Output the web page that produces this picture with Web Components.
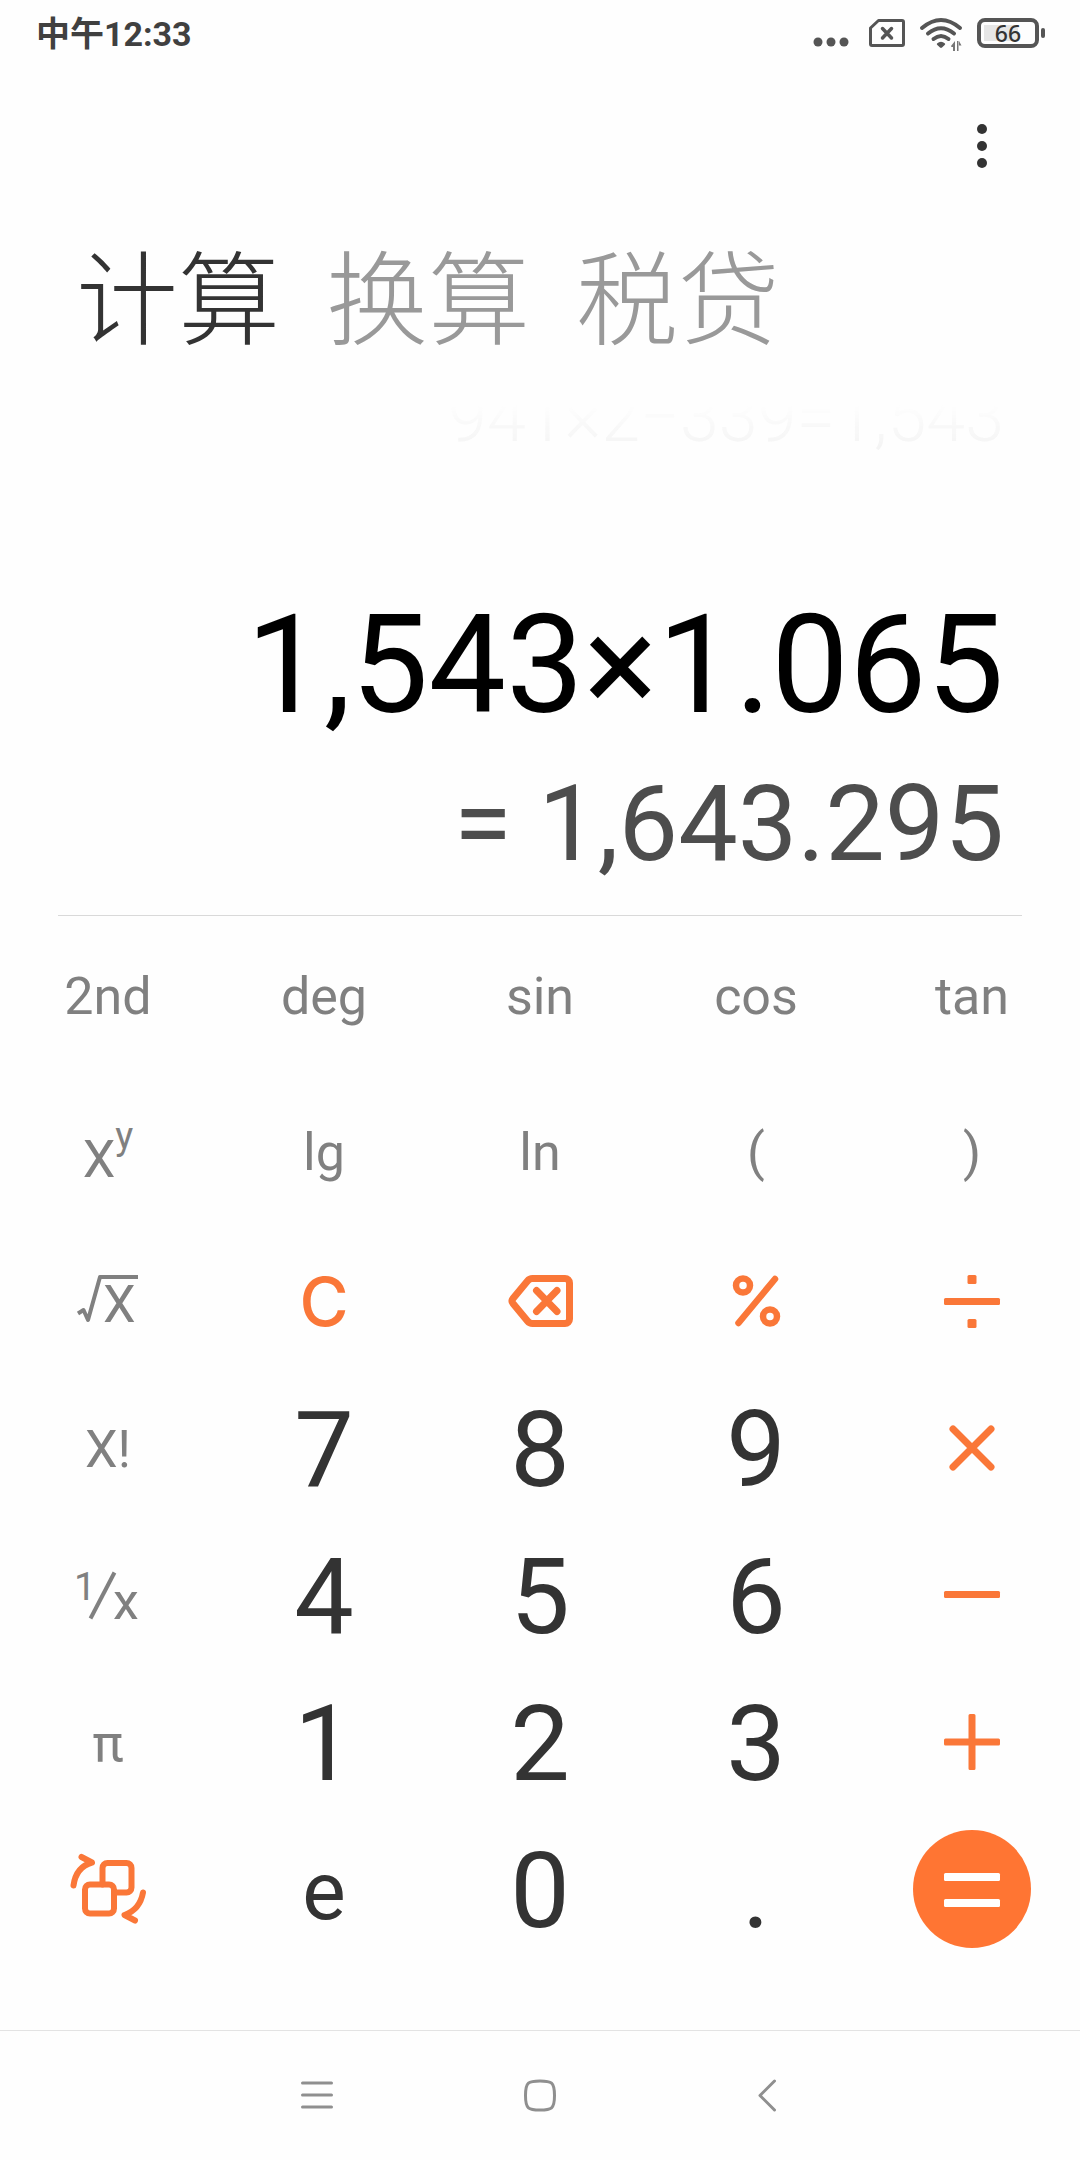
<!DOCTYPE html>
<html lang="zh-CN">
<head>
<meta charset="utf-8">
<meta name="viewport" content="width=device-width, initial-scale=1">
<title>计算器</title>
<style>
html, body { margin: 0; }
body {
  background: #fefefe;
  font-family: Roboto, "Noto Sans CJK SC", sans-serif;
  color: #333;
}
</style>
</head>
<body>
<calc-app></calc-app>

<script>
const ICONS = {
  more: [60, 60, `<g fill="currentColor"><circle cx="30" cy="13" r="5"/><circle cx="30" cy="30" r="5"/><circle cx="30" cy="47" r="5"/></g>`],
  dots: [36, 30, `<g fill="currentColor"><circle cx="5" cy="24" r="4.5"/><circle cx="18" cy="24" r="4.5"/><circle cx="31" cy="24" r="4.5"/></g>`],
  sim: [36, 30, `<g fill="none" stroke="currentColor" stroke-width="3" stroke-linecap="round" stroke-linejoin="round">
    <path d="M9.5 2.5H33q1.5 0 1.5 1.5v22q0 1.5-1.5 1.5H3q-1.500 0-1.500-1.500V10z"/>
    <path stroke-width="3.500" d="M13.500 10.500l9 9.500M22.500 10.500l-9 9.500"/></g>`],
  wifi: [44, 34, `<g fill="none" stroke="currentColor" stroke-width="4" stroke-linecap="round">
    <path d="M3 12q19-16 38 0M9 17.500q13-10.500 26 0M14.500 23q7.500-6 15 0"/></g>
    <path fill="currentColor" d="M18 27.500q4-3.500 8 0q.5.800-.3 1.500l-2.700 2.500q-1 .8-2 0L18.300 29q-.8-.7-.3-1.500z"/>
    <path fill="#777" d="M36 25v10h-2v-4l-1.500 0-.5-1 4-5zM38 25h1.500v10H38zM40 25l2.500 4.500H40z"/>`],
  backspace: [72, 64, `<g fill="none" stroke="currentColor" stroke-width="7" stroke-linecap="round" stroke-linejoin="round">
    <path d="M28.500 9.500H61a4.500 4.500 0 0 1 4.500 4.500v36a4.500 4.500 0 0 1-4.500 4.500H28.500q-3 0-5-2.500L9 34.500q-2-2.500 0-5L23.500 12q2-2.500 5-2.500z"/>
    <path d="M32.500 21.500l20.500 21M53 21.500l-20.500 21"/></g>`],
  percent: [64, 64, `<g fill="none" stroke="currentColor" stroke-width="6.500" stroke-linecap="round">
    <circle cx="19" cy="16.500" r="7"/><circle cx="46" cy="47.500" r="7"/><path d="M51 10L14.500 54"/></g>`],
  divide: [64, 64, `<g fill="currentColor"><rect x="4" y="29" width="56" height="7" rx="1.500"/><rect x="27.500" y="6" width="9" height="9" rx="1.500"/><rect x="27.500" y="50" width="9" height="9" rx="1.500"/></g>`],
  times: [64, 64, `<path d="M13 13l38 38M51 13L13 51" fill="none" stroke="currentColor" stroke-width="7" stroke-linecap="round"/>`],
  minus: [64, 64, `<rect x="4" y="28" width="56" height="7" rx="1.500" fill="currentColor"/>`],
  plus: [64, 64, `<path d="M5.500 28.500H28.500V5.500q0-1.500 1.500-1.500h4q1.500 0 1.500 1.500V28.500H58.500q1.500 0 1.500 1.500v4q0 1.500-1.500 1.500H35.500V58.500q0 1.500-1.500 1.500h-4q-1.500 0-1.500-1.500V35.500H5.500Q4 35.500 4 34v-4Q4 28.500 5.500 28.500z" fill="currentColor"/>`],
  equals: [118, 118, `<g fill="currentColor"><rect x="31" y="43" width="56" height="8" rx="1.500"/><rect x="31" y="69" width="56" height="8" rx="1.500"/></g>`],
  convert: [80, 80, `<g fill="none" stroke="currentColor" stroke-width="6" stroke-linecap="round" stroke-linejoin="round">
    <rect x="17" y="35.500" width="29" height="29" rx="5"/>
    <path d="M34.500 35.500V19a5 5 0 0 1 5-5h19a5 5 0 0 1 5 5v19.500a5 5 0 0 1-5 5H46"/>
    <path d="M5.500 36.500Q8 18 24 13.500L13.500 8M75 43.500Q72 60.500 56.500 66L67 71.500"/></g>`],
  // radical sign and fraction stroke: the letters beside them are text
  root: [64, 55, `<path d="M2 38.500l5.500-3.500 4.500 10L24 2H62" fill="none" stroke="currentColor" stroke-width="4" stroke-linejoin="round"/>
    <text x="27" y="47" font-size="52" fill="currentColor">X</text>`],
  inverse: [64, 55, `<text x="-2" y="31" font-size="39" fill="currentColor">1</text>
    <path d="M14.500 49.500L38.500 3.500" stroke="currentColor" stroke-width="4"/>
    <text x="37" y="50" font-size="52" fill="currentColor">x</text>`],
  recents: [48, 48, `<path d="M11.500 11h29M11.500 23h29M11.500 35h29" stroke="currentColor" stroke-width="3" stroke-linecap="round"/>`],
  home: [48, 48, `<path d="M24 9c11.500 0 14.500 1 14.500 14.500S35.500 38 24 38 9.500 37 9.500 23.500 12.500 9 24 9z" fill="none" stroke="currentColor" stroke-width="3"/>`],
  back: [48, 48, `<path d="M33.500 9L19 23.500l14.500 14.500" fill="none" stroke="currentColor" stroke-width="3" stroke-linecap="round" stroke-linejoin="round"/>`]
};

customElements.define('calc-icon',
  class extends HTMLElement {
    constructor() {
      super();
      this.attachShadow({ mode: 'open' });
    }

    connectedCallback() {
      const [w, h, shape] = ICONS[this.getAttribute('name')];
      this.shadowRoot.innerHTML = `
<style>
:host { display: block; flex: none; }
svg { display: block; overflow: visible; }
</style>
<svg width="${w}" height="${h}" viewBox="0 0 ${w} ${h}">${shape}</svg>`;
    }
  });

customElements.define('status-bar',
  class extends HTMLElement {
    constructor() {
      super();
      this.attachShadow({ mode: 'open' });
      this.shadowRoot.innerHTML = `
<style>
:host {
  display: flex;
  align-items: center;
  justify-content: space-between;
  height: 66px;
  padding: 0 35px 0 36px;
  color: #555;
}
.time {
  padding-bottom: 4px;
  font-size: 34px;
  font-weight: 700;
  color: #404040;
}
.icons {
  display: flex;
  align-items: center;
}
.icons calc-icon { margin-right: 14px; }
.icons .dots { margin-right: 20px; }
.battery {
  box-sizing: border-box;
  display: flex;
  align-items: center;
  justify-content: center;
  width: 62px;
  height: 30px;
  border: 4px solid #555;
  border-radius: 8px;
  background: linear-gradient(#e6e6e6, #e6e6e6) 3px center / 34px 16px no-repeat;
  font: 500 23px/22px "Noto Sans", sans-serif;
  color: #333;
}
.nub {
  width: 4px;
  height: 10px;
  margin-left: 2px;
  border-radius: 2px;
  background: #555;
}
</style>
<div class="time"><slot></slot></div>
<div class="icons">
  <calc-icon class="dots" name="dots"></calc-icon>
  <calc-icon name="sim"></calc-icon>
  <calc-icon name="wifi"></calc-icon>
  <span class="battery">${this.getAttribute('battery')}</span>
  <span class="nub"></span>
</div>`;
    }
  });

customElements.define('calc-header',
  class extends HTMLElement {
    constructor() {
      super();
      this.attachShadow({ mode: 'open' });
      this.shadowRoot.innerHTML = `
<style>
:host { display: block; }
button {
  padding: 0;
  border: 0;
  background: none;
  font: inherit;
  color: inherit;
}
.bar {
  display: flex;
  align-items: center;
  justify-content: flex-end;
  height: 160px;
  padding: 0 68px;
}
nav {
  display: flex;
  gap: 46px;
  padding: 0 76px 10px;
  font: 300 102px/134px "Noto Sans CJK SC", sans-serif;
  color: #999;
}
[aria-selected=true] { color: #333; }
</style>
<div class="bar"><button aria-label="更多"><calc-icon name="more"></calc-icon></button></div>
<nav role="tablist">
  <button role="tab" aria-selected="true">计算</button>
  <button role="tab" aria-selected="false">换算</button>
  <button role="tab" aria-selected="false">税贷</button>
</nav>`;
      const tabs = this.shadowRoot.querySelectorAll('[role=tab]');
      tabs.forEach(tab => {
        tab.addEventListener('click', () => {
          tabs.forEach(t => t.setAttribute('aria-selected', t === tab));
        });
      });
    }
  });

customElements.define('calc-display',
  class extends HTMLElement {
    constructor() {
      super();
      this.attachShadow({ mode: 'open' });
      this.shadowRoot.innerHTML = `
<style>
:host {
  display: block;
  margin: 0 58px;
  padding: 35px 18px 14px;
  border-bottom: 1px solid #d9d9d9;
  text-align: right;
  white-space: nowrap;
}
/* scrolled list of past results, faded out towards the tabs */
.history {
  display: flex;
  flex-direction: column;
  justify-content: flex-end;
  height: 178px;
  overflow: hidden;
  font-size: 70px;
  font-weight: 300;
  line-height: 80px;
  color: #f2f2f2;
  -webkit-mask-image: linear-gradient(transparent, #000 50px);
  mask-image: linear-gradient(transparent, #000 50px);
}
.history slot { display: block; padding-bottom: 126px; }
.expression {
  font-size: 138px;
  line-height: 164px;
  color: #000;
}
.result {
  font-size: 106px;
  line-height: 154px;
  color: #4d4d4d;
}
</style>
<div class="history"><slot name="history"></slot></div>
<div class="expression"><slot name="expression"></slot></div>
<div class="result"><slot name="result"></slot></div>`;
    }
  });

customElements.define('calc-key',
  class extends HTMLElement {
    constructor() {
      super();
      this.attachShadow({ mode: 'open' });
    }

    connectedCallback() {
      const label = this.getAttribute('label');
      this.shadowRoot.innerHTML = `
<style>
:host {
  display: flex;
  align-items: center;
  justify-content: center;
  font-size: 52px;
  color: #808080;
}
:host([kind=num]) { font-size: 106px; color: #333; }
:host([kind=const]) { font-size: 82px; color: #333; }
:host([kind=op]) { padding-bottom: 3px; color: #fa7738; }
:host([kind=equals]) { padding-bottom: 4px; }
button {
  display: flex;
  align-items: center;
  justify-content: center;
  width: 100%;
  height: 100%;
  padding: 0;
  border: 0;
  background: none;
  font: inherit;
  color: inherit;
}
:host([kind=equals]) button {
  width: 118px;
  height: 118px;
  border-radius: 50%;
  background: #ff7533;
  color: #fff;
}
</style>
<button ${label ? `aria-label="${label}"` : ''}><slot></slot></button>`;
    }
  });

customElements.define('calc-pad',
  class extends HTMLElement {
    constructor() {
      super();
      this.attachShadow({ mode: 'open' });
      this.shadowRoot.innerHTML = `
<style>
:host {
  display: grid;
  grid-template-columns: repeat(5, 1fr);
  grid-template-rows: 160px 153px;
  grid-auto-rows: 147px;
}
.power { padding-top: 14px; }
sup { font-size: 38px; line-height: 0; vertical-align: 28px; }
.clear { font: 500 67px Inter, sans-serif; }
</style>
<calc-key>2nd</calc-key>
<calc-key>deg</calc-key>
<calc-key>sin</calc-key>
<calc-key>cos</calc-key>
<calc-key>tan</calc-key>

<calc-key><span class="power">X<sup>y</sup></span></calc-key>
<calc-key>lg</calc-key>
<calc-key>ln</calc-key>
<calc-key>(</calc-key>
<calc-key>)</calc-key>

<calc-key label="平方根"><calc-icon name="root"></calc-icon></calc-key>
<calc-key kind="op"><span class="clear">C</span></calc-key>
<calc-key kind="op" label="退格"><calc-icon name="backspace"></calc-icon></calc-key>
<calc-key kind="op" label="百分号"><calc-icon name="percent"></calc-icon></calc-key>
<calc-key kind="op" label="除"><calc-icon name="divide"></calc-icon></calc-key>

<calc-key>X!</calc-key>
<calc-key kind="num">7</calc-key>
<calc-key kind="num">8</calc-key>
<calc-key kind="num">9</calc-key>
<calc-key kind="op" label="乘"><calc-icon name="times"></calc-icon></calc-key>

<calc-key label="倒数"><calc-icon name="inverse"></calc-icon></calc-key>
<calc-key kind="num">4</calc-key>
<calc-key kind="num">5</calc-key>
<calc-key kind="num">6</calc-key>
<calc-key kind="op" label="减"><calc-icon name="minus"></calc-icon></calc-key>

<calc-key>π</calc-key>
<calc-key kind="num">1</calc-key>
<calc-key kind="num">2</calc-key>
<calc-key kind="num">3</calc-key>
<calc-key kind="op" label="加"><calc-icon name="plus"></calc-icon></calc-key>

<calc-key kind="op" label="切换键盘"><calc-icon name="convert"></calc-icon></calc-key>
<calc-key kind="const">e</calc-key>
<calc-key kind="num">0</calc-key>
<calc-key kind="num">.</calc-key>
<calc-key kind="equals" label="等于"><calc-icon name="equals"></calc-icon></calc-key>`;
    }
  });

customElements.define('nav-bar',
  class extends HTMLElement {
    constructor() {
      super();
      this.attachShadow({ mode: 'open' });
      this.shadowRoot.innerHTML = `
<style>
:host {
  display: flex;
  align-items: center;
  justify-content: center;
  gap: 177px;
  height: 129px;
  border-top: 1px solid #e3e3e3;
  color: #8f8f8f;
}
button {
  padding: 0;
  border: 0;
  background: none;
  color: inherit;
}
</style>
<button aria-label="最近任务"><calc-icon name="recents"></calc-icon></button>
<button aria-label="主屏幕"><calc-icon name="home"></calc-icon></button>
<button aria-label="返回"><calc-icon name="back"></calc-icon></button>`;
    }
  });

customElements.define('calc-app',
  class extends HTMLElement {
    constructor() {
      super();
      this.attachShadow({ mode: 'open' });
      this.shadowRoot.innerHTML = `
<style>
:host {
  display: flex;
  flex-direction: column;
  min-height: 100vh;
}
nav-bar { margin-top: auto; }
</style>
<status-bar battery="66">中午12:33</status-bar>
<calc-header></calc-header>
<calc-display>
  <span slot="history">941×2−339=1,543</span>
  <span slot="expression">1,543×1.065</span>
  <span slot="result">= 1,643.295</span>
</calc-display>
<calc-pad></calc-pad>
<nav-bar></nav-bar>`;
    }
  });
</script>
</body>
</html>
